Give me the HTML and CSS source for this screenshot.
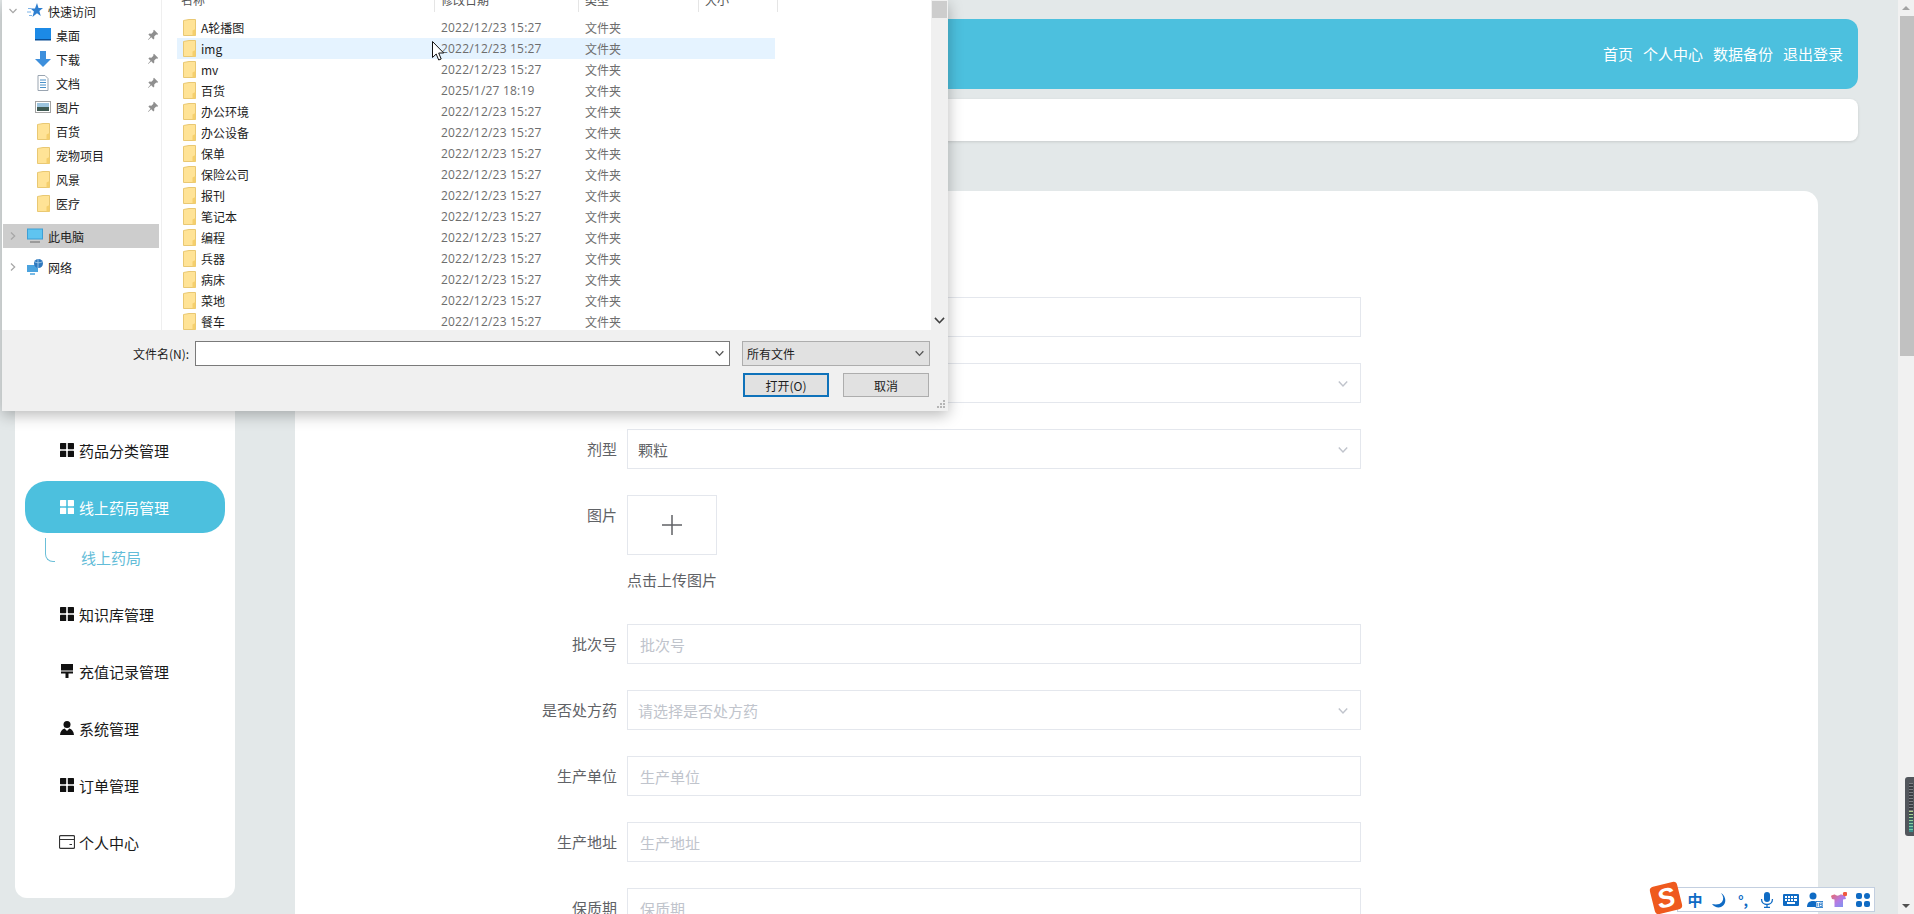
FILE: index.html
```html
<!DOCTYPE html>
<html lang="zh-CN">
<head>
<meta charset="utf-8">
<title>线上药局</title>
<link rel="stylesheet" href="styles.css">
</head>
<body>
<svg class="defs" width="0" height="0" aria-hidden="true">
  <defs>
    <linearGradient id="shirt" x1="0" y1="0" x2="1" y2="1"><stop offset="0" stop-color="#e8696b"/><stop offset=".5" stop-color="#b47be6"/><stop offset="1" stop-color="#6f9cf0"/></linearGradient>
    <symbol id="folder" viewBox="0 0 13 17"><path d="M.5 1.500 6 .5 12.500.5v16H.5z" fill="#ffe396" stroke="#e9c873"/><path d="M9.500 16.500v-5l3-1.500v6.500z" fill="#f5cf6d"/></symbol>
    <symbol id="grid" viewBox="0 0 14 14"><rect x="0" y="0" width="6.200" height="6.200" rx=".6"/><rect x="7.800" y="0" width="6.200" height="6.200" rx=".6"/><rect x="0" y="7.800" width="6.200" height="6.200" rx=".6"/><rect x="7.800" y="7.800" width="6.200" height="6.200" rx=".6"/></symbol>
    <symbol id="pin" viewBox="0 0 12 12"><path d="M7 .8 11.200 5l-1 .7-1-.3-2 2 .1 2-1 1-2-2.100L1.200 11l-.3-.3 2.600-3L1.400 5.600l1-1 2 .1 2-2-.2-1z" fill="#8f8f8f"/></symbol>
    <symbol id="chev" viewBox="0 0 10 10"><path d="M1.500 3 5 6.700 8.500 3" fill="none" stroke="currentColor" stroke-width="1.200"/></symbol>
    <symbol id="chevr" viewBox="0 0 10 10"><path d="M3 1.500 6.700 5 3 8.500" fill="none" stroke="currentColor" stroke-width="1.200"/></symbol>
  </defs>
</svg>

<div class="app">
  <div class="page">
    <header class="topbar">
      <nav class="topnav">
        <a>首页</a><a>个人中心</a><a>数据备份</a><a>退出登录</a>
      </nav>
    </header>
    <div class="crumb"></div>
    <div class="content">
      <aside class="sidebar">
        <div class="menu-item"><svg class="mi"><use href="#grid"/></svg>药品分类管理</div>
        <div class="menu-item active"><svg class="mi"><use href="#grid"/></svg>线上药局管理</div>
        <div class="sub"><span class="curve"></span><span class="sub-text">线上药局</span></div>
        <div class="menu-item"><svg class="mi"><use href="#grid"/></svg>知识库管理</div>
        <div class="menu-item"><svg class="mi" viewBox="0 0 14 14"><path d="M1 0h12v6.500H1zM1 7.500h12v2H8.500v4.500h-3V9.500H1z"/></svg>充值记录管理</div>
        <div class="menu-item"><svg class="mi" viewBox="0 0 14 14"><circle cx="7" cy="3.600" r="3.500"/><path d="M0 14c.3-3.500 2-5.700 4.600-6.400L7 10l2.400-2.400C12 8.300 13.700 10.500 14 14z"/></svg>系统管理</div>
        <div class="menu-item"><svg class="mi"><use href="#grid"/></svg>订单管理</div>
        <div class="menu-item"><svg class="mi wide" viewBox="0 0 16 14"><path d="M1.500.7h13a1 1 0 0 1 1 1v10.600a1 1 0 0 1-1 1h-13a1 1 0 0 1-1-1V1.700a1 1 0 0 1 1-1zM.5 4.500h15M10.500 9.500h2.500" fill="none" stroke="#333" stroke-width="1.200"/></svg>个人中心</div>
      </aside>
      <main class="card">
        <div class="row"><label class="lbl"></label><div class="field"></div></div>
        <div class="row"><label class="lbl"></label><div class="field"><svg class="arrow"><use href="#chev"/></svg></div></div>
        <div class="row"><label class="lbl">剂型</label><div class="field value">颗粒<svg class="arrow"><use href="#chev"/></svg></div></div>
        <div class="row upload-row">
          <label class="lbl">图片</label>
          <div class="upload">
            <div class="upload-box"><svg class="plus" viewBox="0 0 20 20"><path d="M10 0v20M0 10h20" stroke="#606266" stroke-width="1.500"/></svg></div>
            <div class="upload-tip">点击上传图片</div>
          </div>
        </div>
        <div class="row"><label class="lbl">批次号</label><div class="field ph">批次号</div></div>
        <div class="row"><label class="lbl">是否处方药</label><div class="field ph sel">请选择是否处方药<svg class="arrow"><use href="#chev"/></svg></div></div>
        <div class="row"><label class="lbl">生产单位</label><div class="field ph">生产单位</div></div>
        <div class="row"><label class="lbl">生产地址</label><div class="field ph">生产地址</div></div>
        <div class="row"><label class="lbl">保质期</label><div class="field ph">保质期</div></div>
      </main>
    </div>
  </div>
  <div class="scrollbar">
    <span class="sb-up"></span>
    <span class="sb-thumb"></span>
    <span class="sb-down"></span>
  </div>
</div>

<section class="dialog">
  <div class="dlg-body">
    <div class="tree">
      <div class="t0"><svg class="tchev"><use href="#chev"/></svg><svg class="tic" viewBox="0 0 16 16"><path d="m10 0 1.500 5H16l-3.600 3 1.300 5L10 10.300 5.500 14l1.400-5.500L3.500 5.500H8z" fill="#2f7fd0"/><path d="M1 5.500h3M0 9h4M2 12.500h3" stroke="#7db4e8"/></svg><span>快速访问</span></div>
      <div class="t1"><svg class="tic" viewBox="0 0 16 16"><rect y="1" width="16" height="12" fill="#1c8ae6"/><rect y="12" width="16" height="1.500" fill="#0b4f96"/></svg><span>桌面</span><svg class="tpin"><use href="#pin"/></svg></div>
      <div class="t1"><svg class="tic" viewBox="0 0 16 16"><path d="M5 0h6v8h5l-8 8-8-8h5z" fill="#3d8fdc"/></svg><span>下载</span><svg class="tpin"><use href="#pin"/></svg></div>
      <div class="t1"><svg class="tic" viewBox="0 0 16 16"><path d="M3 .5h7l3 3v12H3z" fill="#fff" stroke="#9aa5b1"/><path d="M5 5h6M5 7.500h6M5 10h6M5 12.500h6" stroke="#4a90c8"/></svg><span>文档</span><svg class="tpin"><use href="#pin"/></svg></div>
      <div class="t1"><svg class="tic" viewBox="0 0 16 16"><rect x=".5" y="2.500" width="15" height="11" fill="#fff" stroke="#a3a3a3"/><rect x="2" y="4" width="12" height="4" fill="#9cc4de"/><rect x="2" y="8" width="12" height="4" fill="#3f5a52"/></svg><span>图片</span><svg class="tpin"><use href="#pin"/></svg></div>
      <div class="t1"><svg class="tic fold"><use href="#folder"/></svg><span>百货</span></div>
      <div class="t1"><svg class="tic fold"><use href="#folder"/></svg><span>宠物项目</span></div>
      <div class="t1"><svg class="tic fold"><use href="#folder"/></svg><span>风景</span></div>
      <div class="t1"><svg class="tic fold"><use href="#folder"/></svg><span>医疗</span></div>
      <div class="t0 pc"><svg class="tchev"><use href="#chevr"/></svg><svg class="tic" viewBox="0 0 16 16"><rect x=".5" y="1" width="15" height="10" fill="#5fc4f0" stroke="#3d9fd6"/><path d="M3 14h10" stroke="#8a8a8a" stroke-width="1.500"/></svg><span>此电脑</span></div>
      <div class="t0 net"><svg class="tchev"><use href="#chevr"/></svg><svg class="tic" viewBox="0 0 16 16"><rect x="0" y="6" width="11" height="7" fill="#4ba3de"/><path d="M3 15h5" stroke="#4ba3de" stroke-width="1.500"/><circle cx="11.500" cy="4.500" r="4.500" fill="#2f79bf"/><path d="M8 3c2 1 5 1 7 0M11 0v9" stroke="#bfe0f5" stroke-width=".7" fill="none"/></svg><span>网络</span></div>
    </div>
    <div class="files">
      <div class="fhead">
        <span>名称</span><span>修改日期</span><span>类型</span><span>大小</span>
      </div>
      <div class="frow"><span class="fname"><svg class="fic"><use href="#folder"/></svg>A轮播图</span><span class="fdate">2022/12/23 15:27</span><span class="ftype">文件夹</span></div>
      <div class="frow hover"><span class="fname"><svg class="fic"><use href="#folder"/></svg>img</span><span class="fdate">2022/12/23 15:27</span><span class="ftype">文件夹</span></div>
      <div class="frow"><span class="fname"><svg class="fic"><use href="#folder"/></svg>mv</span><span class="fdate">2022/12/23 15:27</span><span class="ftype">文件夹</span></div>
      <div class="frow"><span class="fname"><svg class="fic"><use href="#folder"/></svg>百货</span><span class="fdate">2025/1/27 18:19</span><span class="ftype">文件夹</span></div>
      <div class="frow"><span class="fname"><svg class="fic"><use href="#folder"/></svg>办公环境</span><span class="fdate">2022/12/23 15:27</span><span class="ftype">文件夹</span></div>
      <div class="frow"><span class="fname"><svg class="fic"><use href="#folder"/></svg>办公设备</span><span class="fdate">2022/12/23 15:27</span><span class="ftype">文件夹</span></div>
      <div class="frow"><span class="fname"><svg class="fic"><use href="#folder"/></svg>保单</span><span class="fdate">2022/12/23 15:27</span><span class="ftype">文件夹</span></div>
      <div class="frow"><span class="fname"><svg class="fic"><use href="#folder"/></svg>保险公司</span><span class="fdate">2022/12/23 15:27</span><span class="ftype">文件夹</span></div>
      <div class="frow"><span class="fname"><svg class="fic"><use href="#folder"/></svg>报刊</span><span class="fdate">2022/12/23 15:27</span><span class="ftype">文件夹</span></div>
      <div class="frow"><span class="fname"><svg class="fic"><use href="#folder"/></svg>笔记本</span><span class="fdate">2022/12/23 15:27</span><span class="ftype">文件夹</span></div>
      <div class="frow"><span class="fname"><svg class="fic"><use href="#folder"/></svg>编程</span><span class="fdate">2022/12/23 15:27</span><span class="ftype">文件夹</span></div>
      <div class="frow"><span class="fname"><svg class="fic"><use href="#folder"/></svg>兵器</span><span class="fdate">2022/12/23 15:27</span><span class="ftype">文件夹</span></div>
      <div class="frow"><span class="fname"><svg class="fic"><use href="#folder"/></svg>病床</span><span class="fdate">2022/12/23 15:27</span><span class="ftype">文件夹</span></div>
      <div class="frow"><span class="fname"><svg class="fic"><use href="#folder"/></svg>菜地</span><span class="fdate">2022/12/23 15:27</span><span class="ftype">文件夹</span></div>
      <div class="frow"><span class="fname"><svg class="fic"><use href="#folder"/></svg>餐车</span><span class="fdate">2022/12/23 15:27</span><span class="ftype">文件夹</span></div>
    </div>
    <div class="dlg-scroll">
      <span class="ds-thumb"></span>
      <svg class="ds-down"><use href="#chev"/></svg>
    </div>
  </div>
  <div class="dlg-foot">
    <div class="foot-row">
      <label class="fn-label">文件名(N):</label>
      <div class="fn-input"><svg class="fn-chev"><use href="#chev"/></svg></div>
      <div class="fn-select">所有文件<svg class="fn-chev"><use href="#chev"/></svg></div>
    </div>
    <div class="foot-btns">
      <button class="btn primary">打开(O)</button>
      <button class="btn">取消</button>
    </div>
  </div>
  <svg class="grip" viewBox="0 0 8 8"><path d="M6 0h2v2H6zM3 3h2v2H3zM6 3h2v2H6zM0 6h2v2H0zM3 6h2v2H3zM6 6h2v2H6z" fill="#b5b5b5"/></svg>
</section>

<svg class="cursor" viewBox="0 0 12 20"><path d="M.5.500v16l3.700-3.500 2.500 6 2.500-1-2.500-6h5z" fill="#fff" stroke="#111" stroke-width="1"/></svg>

<div class="meter">
  <span class="m-dark"></span><span class="m-lit"></span>
</div>

<div class="ime">
  <div class="ime-logo">S</div>
  <div class="ime-bar">
    <span class="ime-zh">中</span>
    <svg class="ime-ic" viewBox="0 0 16 16"><path d="M10 1c2.500 3 3 6 1 9-2 2.500-6 3-10 2 2 3 6 4 9 3 3.500-1.500 5-5 4-8.500C13.500 4 12 2 10 1z"/></svg>
    <span class="ime-punc">°,</span>
    <svg class="ime-ic" viewBox="0 0 16 16"><rect x="5" y="0" width="6" height="10" rx="3"/><path d="M2.500 7c0 3.500 2.500 5.500 5.500 5.500s5.500-2 5.500-5.500M8 12.500V15M5 15.500h6" fill="none" stroke="#0f6bc4" stroke-width="1.300"/></svg>
    <svg class="ime-ic" viewBox="0 0 16 16"><path fill-rule="evenodd" d="M1 2h14a1 1 0 0 1 1 1v10a1 1 0 0 1-1 1H1a1 1 0 0 1-1-1V3a1 1 0 0 1 1-1zm1 2v2h2V4zm3 0v2h2V4zm3 0v2h2V4zm3 0v2h3V4zM2 7v2h2V7zm3 0v2h2V7zm3 0v2h2V7zm3 0v2h3V7zM4 10v2h8v-2z"/></svg>
    <svg class="ime-ic" viewBox="0 0 16 16"><circle cx="6" cy="4" r="3.500"/><path d="M0 15c0-4 2-6 6-6 2 0 3 .5 4 1.500V15z"/><rect x="9" y="9.500" width="7" height="6" fill="#fff" stroke="#0f6bc4" stroke-width=".8"/><path d="M10.700 11v3.500M12.500 11h2.500v1M12.500 11v3.500h2.500v-2h-2.500" fill="none" stroke="#0f6bc4" stroke-width=".7"/></svg>
    <svg class="ime-ic" viewBox="0 0 16 16"><path d="M0 4c1-1 3-1.500 4-1.500 1 1.500 4 1.500 5.500 0 1.500 0 3.500.5 4.500 1.500l1 3-3 .5V15H3.500V7.500L1 7z" fill="url(#shirt)"/><circle cx="14" cy="2" r="2.200" fill="#f0583f"/></svg>
    <svg class="ime-ic" viewBox="0 0 16 16"><rect x="1" y="1" width="6" height="6" rx="2"/><rect x="9" y="1" width="6" height="6" rx="3"/><rect x="1" y="9" width="6" height="6" rx="2"/><rect x="9" y="9" width="6" height="6" rx="2"/></svg>
  </div>
</div>
</body>
</html>
```

FILE: styles.css
```css
* { box-sizing: border-box; }
html, body { margin: 0; height: 914px; overflow: hidden; }
body {
  font-family: "Noto Sans CJK SC", "Noto Sans", sans-serif;
  font-size: 15px;
  background: #e3e8e9;
  color: #111;
}
.defs { position: absolute; }

.app { display: flex; height: 914px; overflow: hidden; }
.page { flex: 1; min-width: 0; padding: 19px 40px 0 15px; }

.topbar {
  height: 70px;
  background: #4cc0de;
  border-radius: 12px;
  display: flex;
  align-items: center;
  justify-content: flex-end;
  padding: 0 15px 0 0;
}
.topnav { display: flex; gap: 10px; color: #fff; line-height: 20px; }

.crumb {
  height: 42px;
  margin-top: 10px;
  background: #fff;
  border-radius: 8px;
  box-shadow: 0 1px 3px rgba(0,0,0,.12);
}

.content { display: flex; gap: 60px; margin-top: 50px; align-items: flex-start; }

.sidebar {
  flex: 0 0 220px;
  height: 707px;
  background: #fff;
  border-radius: 12px;
  padding: 233px 10px 0;
  display: flex;
  flex-direction: column;
  gap: 5px;
}
.menu-item {
  height: 52px;
  padding-left: 35px;
  display: flex;
  align-items: center;
  gap: 5px;
  color: #1a1a1a;
  border-radius: 22px;
}
.menu-item.active { background: #4cc0de; color: #fff; }
.mi { width: 14px; height: 14px; flex: none; fill: #111; }
.mi.wide { width: 16px; margin-left: -1px; margin-right: -1px; }
.active .mi { fill: #fff; }
.sub { height: 45px; display: flex; }
.curve {
  width: 10px;
  height: 24px;
  margin-left: 20px;
  border-left: 1px solid #6bbfd8;
  border-bottom: 1px solid #6bbfd8;
  border-bottom-left-radius: 8px;
}
.sub-text { margin-left: 26px; line-height: 39px; color: #62bcd8; }

.card {
  flex: 0 0 1523px;
  height: 760px;
  background: #fff;
  border-radius: 14px 14px 0 0;
  padding: 106px 0 0 202px;
  color: #606266;
}
.row { display: flex; gap: 10px; margin-bottom: 26px; min-height: 40px; }
.lbl { width: 120px; text-align: right; line-height: 40px; flex: none; }
.field {
  width: 734px;
  height: 40px;
  border: 1px solid #e4e7ed;
  display: flex;
  align-items: center;
  padding: 0 10px;
  position: relative;
}
.value { color: #606266; }
.ph { color: #c0c4cc; padding-left: 12px; }
.ph.sel { padding-left: 10px; }
.arrow { position: absolute; right: 11px; top: 14px; width: 12px; height: 12px; color: #c0c4cc; }
.upload-box {
  width: 90px;
  height: 60px;
  border: 1px solid #e4e7ed;
  display: flex;
  align-items: center;
  justify-content: center;
}
.plus { width: 20px; height: 20px; }
.upload-tip { margin-top: 13px; line-height: 24px; width: 100px; }
.upload-row { min-height: 103px; }

.scrollbar {
  flex: 0 0 16px;
  background: #f1f1f1;
  display: flex;
  flex-direction: column;
  align-items: flex-end;
  position: relative;
}
.sb-up {
  position: absolute; left: 4px; top: 6px;
  border: 4px solid transparent; border-top: 0; border-bottom: 4px solid #a3a3a3;
}
.sb-down {
  position: absolute; left: 4px; bottom: 6px;
  border: 4px solid transparent; border-bottom: 0; border-top: 4px solid #505050;
}
.sb-thumb { width: 14px; height: 340px; margin-top: 16px; background: #c1c1c1; }

/* file dialog */
.dialog {
  position: absolute;
  left: 2px; top: 0;
  width: 946px; height: 411px;
  background: #f0f0f0;
  box-shadow: 0 4px 14px rgba(0,0,0,.28);
  overflow: hidden;
  font-size: 12px;
  color: #1c1c1c;
}
.dlg-body { display: flex; height: 330px; background: #fff; }

.tree { width: 160px; flex: none; border-right: 1px solid #efefef; margin-top: -1px; padding-left: 1px; color: #222; }
.t0, .t1 { height: 24px; display: flex; align-items: center; }
.t0 { padding-left: 5px; }
.t1 { padding-left: 32px; }
.tchev { width: 10px; height: 10px; color: #a6a6a6; flex: none; }
.tic { width: 16px; height: 16px; flex: none; margin-right: 5px; }
.t0 .tic { margin-left: 9px; }
.fold { width: 13px; height: 17px; margin: 0 6px 0 2px; }
.tpin { width: 12px; height: 12px; margin-left: auto; margin-right: 2px; }
.pc { margin-top: 9px; margin-right: 2px; background: #cdcdcd; }
.net { margin-top: 7px; }

.files { flex: 1; min-width: 0; padding-left: 15px; }
.frow { display: grid; grid-template-columns: 258px 144px 119px 77px; }
.fhead { display: grid; grid-template-columns: 258px 144px 120px 79px; width: 601px; height: 17px; color: #555; }
.fhead span { height: 12px; line-height: 0; padding-left: 6px; border-right: 1px solid #e5e5e5; }
.fhead span:first-child { padding-left: 4px; }
.frow { height: 21px; line-height: 21px; width: 598px; color: #6d6d6d; }
.frow.hover { background: #e5f3ff; }
.fname { display: flex; align-items: center; gap: 5px; padding-left: 6px; color: #1c1c1c; font-size: 12px; }
.fic { width: 13px; height: 17px; flex: none; }
.fdate { padding-left: 6px; font-family: "Open Sans", "Noto Sans", sans-serif; letter-spacing: .2px; white-space: nowrap; }
.ftype { padding-left: 6px; }

.dlg-scroll { width: 17px; flex: none; background: #f0f0f0; position: relative; }
.ds-thumb { display: block; width: 15px; height: 17px; margin: 1px auto 0; background: #cdcdcd; }
.ds-down { position: absolute; left: 2px; bottom: 3px; width: 13px; height: 13px; color: #404040; stroke: currentColor; }

.dlg-foot { height: 81px; padding-top: 11px; position: relative; }
.foot-row { display: flex; align-items: center; padding-left: 131px; height: 25px; }
.fn-label { width: 62px; white-space: nowrap; }
.fn-input {
  width: 535px; height: 25px;
  background: #fff;
  border: 1px solid #7a7a7a;
  position: relative;
}
.fn-select {
  width: 188px; height: 25px;
  margin-left: 12px;
  padding-left: 4px;
  background: #e1e1e1;
  border: 1px solid #adadad;
  line-height: 23px;
  position: relative;
}
.fn-chev { position: absolute; right: 4px; top: 6px; width: 11px; height: 11px; color: #555; }
.foot-btns { display: flex; justify-content: flex-end; gap: 14px; padding-right: 19px; margin-top: 7px; }
.btn {
  width: 86px; height: 24px;
  padding: 0;
  font: inherit;
  color: #1c1c1c;
  background: #e1e1e1;
  border: 1px solid #adadad;
}
.btn.primary { border: 2px solid #0f72ba; }
.grip { position: absolute; right: 3px; bottom: 3px; width: 8px; height: 8px; }

.cursor { position: absolute; left: 432px; top: 41px; width: 12px; height: 20px; }

.meter {
  position: absolute;
  left: 1905px; top: 777px;
  width: 9px; height: 59px;
  border-radius: 3px 0 0 3px;
  background: #52565c;
  padding: 6px 1px 4px 4px;
  display: flex;
  flex-direction: column;
}
.m-dark {
  height: 28px;
  background: repeating-linear-gradient(#7a7d82 0 1px, #3c3f44 1px 3px);
}
.m-lit {
  height: 21px;
  background:
    linear-gradient(rgba(0,0,0,0), rgba(60,200,190,.6)),
    repeating-linear-gradient(#b5d38c 0 1px, #3c3f44 1px 3px);
}

.ime {
  position: absolute;
  left: 1650px; top: 883px;
  width: 225px; height: 31px;
}
.ime-bar {
  position: absolute;
  left: 27px; top: 4px;
  width: 198px; height: 25px;
  background: #fff;
  border: 1px solid #c3cfe0;
  display: flex;
  align-items: center;
  padding-left: 9px;
  gap: 8px;
  color: #0f6bc4;
}
.ime-logo {
  position: absolute;
  left: 2px; top: 1px;
  width: 28px; height: 28px;
  background: #ef5a1e;
  border-radius: 4px;
  transform: rotate(-14deg);
  color: #fff;
  font: italic bold 27px/28px "Liberation Sans", sans-serif;
  text-align: center;
  z-index: 1;
}
.ime-zh { width: 16px; font-size: 15px; font-weight: 700; line-height: 16px; text-align: center; }
.ime-punc { width: 16px; font-size: 14px; font-weight: 700; line-height: 16px; text-align: center; }
.ime-ic { width: 16px; height: 16px; fill: #0f6bc4; flex: none; }
```
